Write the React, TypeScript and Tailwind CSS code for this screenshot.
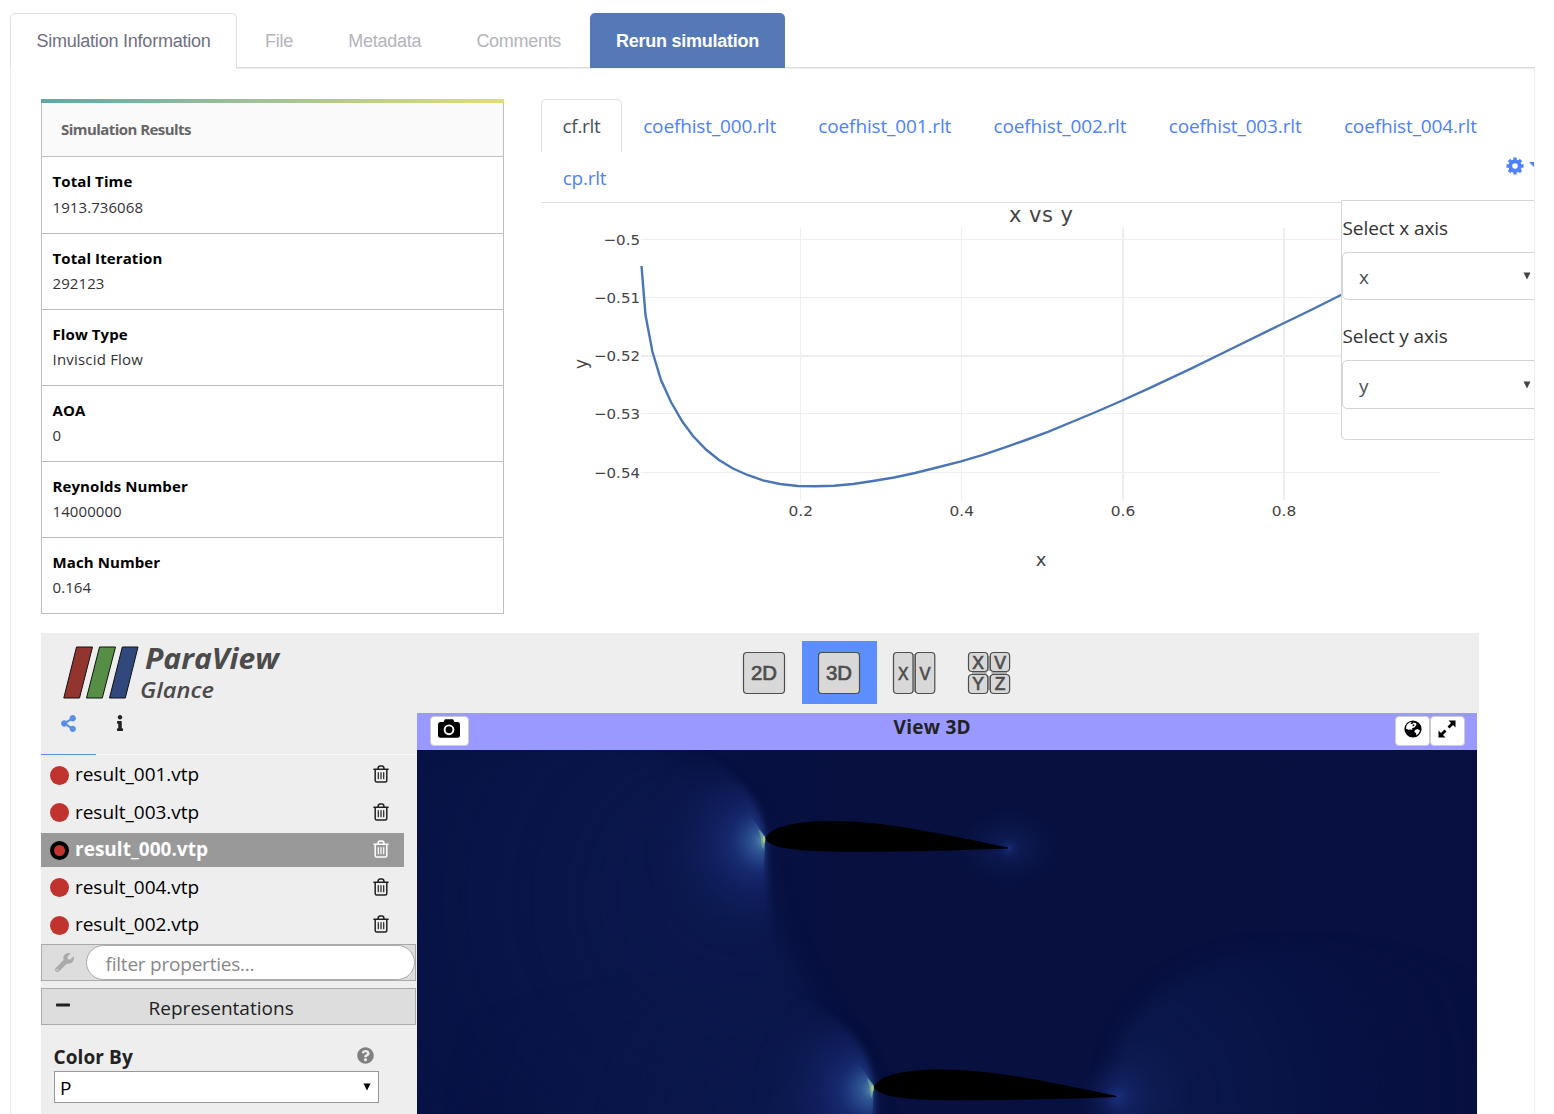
import React from "react";
import { FaShareAlt, FaInfo, FaWrench, FaMinus, FaQuestionCircle } from "react-icons/fa";

const UI = "font-['Open_Sans','Noto_Sans',sans-serif]";

const results = [
  ["Total Time", "1913.736068"],
  ["Total Iteration", "292123"],
  ["Flow Type", "Inviscid Flow"],
  ["AOA", "0"],
  ["Reynolds Number", "14000000"],
  ["Mach Number", "0.164"],
];

function PageTabs() {
  const idle = "flex items-center px-[27px] pt-[2px] text-[#b4b4bc]";
  return (
    <div className="flex h-[55px] w-[1525px] border-b border-[#dcdde0] font-['Liberation_Sans',Arial,sans-serif] text-[18px] tracking-[-0.22px]">
      <div className="flex h-[56px] w-[227px] shrink-0 items-center justify-center rounded-t-[5px] border border-b-0 border-[#dee0e3] bg-white text-[#6f6f80]">
        Simulation Information
      </div>
      <div className={idle + " ml-[1px]"}>File</div>
      <div className={idle + " ml-[1px]"}>Metadata</div>
      <div className={idle + " ml-[1px] tracking-[-0.3px]"}>Comments</div>
      <div className="ml-auto mr-[750px] flex h-[55px] w-[195px] shrink-0 items-center justify-center rounded-t-[5px] bg-[#5578b7] pt-[1px] font-bold tracking-[-0.25px] text-white">
        Rerun simulation
      </div>
    </div>
  );
}

function ResultsCard() {
  return (
    <section className="h-[515px] w-[463px] shrink-0">
      <div className="h-1 bg-gradient-to-r from-[#62a7a5] to-[#e0dc7c]" />
      <div className="border border-t-0 border-[#bcbec2]">
        <h2 className="flex h-[53px] items-center bg-[#fafafa] pl-[19px] text-[15px] font-bold tracking-[-0.55px] text-[#666]">
          Simulation Results
        </h2>
        {results.map(([k, v], i) => (
          <div key={k} className={"border-t border-[#bcbec2] pl-[10.5px] pt-[12px] " + (i === 0 ? "h-[77px]" : "h-[76px]")}>
            <div className="h-[25px] text-[15px] font-bold leading-[25px] tracking-[0.1px] text-black">{k}</div>
            <div className={"h-[25px] text-[15px] text-[#333] " + (i === 0 ? "leading-[26px] tracking-[0.08px]" : i === 2 ? "leading-[24px] tracking-[0.2px]" : "leading-[24px] tracking-[0.08px]")}>{v}</div>
          </div>
        ))}
      </div>
    </section>
  );
}

const curve: [number, number][] = [
  [641.5, 266], [645.5, 315], [652.5, 352], [661, 380], [671, 402], [682, 421], [693, 436], [706, 449.5], [719, 460],
  [733, 468.5], [747.5, 475], [763, 480.3], [780, 484], [798, 486], [815, 486.3], [834, 485.7], [853, 484], [873, 481],
  [894, 477.5], [915, 473], [937, 467.5], [961, 461.3], [983, 454.8], [1005, 447.4], [1026, 440], [1048, 431.8],
  [1073, 421.5], [1097, 411.5], [1120, 401.5], [1150, 387.8], [1190, 369.2], [1230, 349.5], [1280, 325], [1310, 310.5], [1346, 292.5],
];

function Plot() {
  return (
    <svg width="938" height="400" viewBox="541 203 938 400" className="block font-['DejaVu_Sans',Verdana,sans-serif]" fill="#444">
      <g stroke="#eee" shapeRendering="crispEdges">
        {[239.5, 297.5, 413.5, 472.5].map((y) => <path key={y} d={`M641 ${y}H1440`} />)}
        <path d="M641 356H1440" strokeWidth="2" />
        {[800.5, 961.5].map((x) => <path key={x} d={`M${x} 228V500`} />)}
        <path d="M1123 228V500M1284 228V500" strokeWidth="2" />
      </g>
      <polyline points={curve.map((p) => p.join(",")).join(" ")} fill="none" stroke="#4a76b8" strokeWidth="2.4" />
      <text x="1041" y="222" fontSize="21" textAnchor="middle" textLength="64">x vs y</text>
      <g fontSize="14.8" textAnchor="end">
        <text x="640" y="244.7" textLength="36.5" lengthAdjust="spacingAndGlyphs">−0.5</text>
        <text x="640" y="302.7" textLength="46" lengthAdjust="spacingAndGlyphs">−0.51</text>
        <text x="640" y="360.7" textLength="46" lengthAdjust="spacingAndGlyphs">−0.52</text>
        <text x="640" y="418.7" textLength="46" lengthAdjust="spacingAndGlyphs">−0.53</text>
        <text x="640" y="477.7" textLength="46" lengthAdjust="spacingAndGlyphs">−0.54</text>
      </g>
      <g fontSize="14.8" textAnchor="middle">
        {[[800.8, "0.2"], [961.8, "0.4"], [1123, "0.6"], [1284, "0.8"]].map(([x, t]) => (
          <text key={t} x={x} y="515.7" textLength="24.5" lengthAdjust="spacingAndGlyphs">{t}</text>
        ))}
      </g>
      <text x="1041" y="565.5" fontSize="18" textAnchor="middle">x</text>
      <text transform="translate(587 364) rotate(-90)" fontSize="17" textAnchor="middle">y</text>
    </svg>
  );
}

function AxisSelect({ label, value, tall }: { label: string; value: string; tall?: boolean }) {
  return (
    <>
      <div className="h-[30px] pl-[0.5px] text-[19px] leading-[30px] tracking-[-0.08px] text-[#333]">{label}</div>
      <div className={"mb-[21px] mt-[9px] flex w-[230px] items-center rounded-[5px] border border-[#ced4da] pl-[16px] text-[19px] text-[#495057] " + (tall ? "h-[49px]" : "h-[48px]")}>
        <span className={"w-[164px] " + (tall ? "pt-[3px]" : "pt-[2px]")}>{value}</span>
        <svg width="8" height="8" viewBox="0 0 8 8"><path d="M0.5 0.5h7l-3.5 7z" fill="#444" /></svg>
      </div>
    </>
  );
}

function Gear() {
  return (
    <svg width="18" height="18" viewBox="-9 -9 18 18" fill="none" stroke="currentColor">
      <circle r="4.7" strokeWidth="3.8" />
      {[0, 45, 90, 135].map((a) => (
        <path key={a} transform={`rotate(${a})`} d="M0 -8.5V-5.5M0 5.5V8.5" strokeWidth="3.4" />
      ))}
    </svg>
  );
}

function PlotPanel() {
  const tab = "flex h-[52px] w-[175.2px] items-center justify-center pt-[2px]";
  return (
    <section className="relative ml-[37px] h-[504px] w-[994px] shrink-0">
      <div className="flex h-[104px] w-[960px] flex-wrap border-b border-[#dee2e6] text-[19px] tracking-[-0.14px] text-[#4f80ff]">
        <div className="flex h-[53px] w-[81px] items-center justify-center rounded-t-[5px] border border-b-0 border-[#dee2e6] pt-[1px] tracking-[-0.3px] text-[#495057]">cf.rlt</div>
        {["000", "001", "002", "003", "004"].map((n) => (
          <div key={n} className={tab}>{`coefhist_${n}.rlt`}</div>
        ))}
        <div className="-mt-px flex h-[52px] w-[87px] items-center justify-center pt-[2px] tracking-[-0.25px]">cp.rlt</div>
      </div>
      <Plot />
      <div className="absolute left-[965px] top-[58px] flex items-start text-[#4f80ff]">
        <Gear />
        <svg className="ml-[5px] mt-[5px]" width="12" height="6"><path d="M0 0h11l-5.5 5.5z" fill="currentColor" /></svg>
      </div>
      <div className="absolute left-[800px] top-[101px] h-[240px] w-[240px] rounded-bl-[5px] border border-[#d4d6da] bg-white pt-[12px]">
        <AxisSelect label="Select x axis" value="x" />
        <AxisSelect label="Select y axis" value="y" tall />
      </div>
    </section>
  );
}

function Logo() {
  return (
    <svg width="240" height="80" viewBox="41 633 240 80" className="block shrink-0 overflow-visible">
      <g stroke="#111" strokeWidth="1">
        <path d="M76.5 647H92.5L79.5 698H63.8z" fill="#93352f" />
        <path d="M99.5 647H115.5L102.3 698H86.5z" fill="#578e45" />
        <path d="M122.3 647H138L125.3 698H109.5z" fill="#30487c" />
      </g>
      <g className={UI} fill="#4b4b4b" fontStyle="italic">
        <text x="145" y="668.5" fontSize="28" fontWeight="700" textLength="134" lengthAdjust="spacingAndGlyphs">ParaView</text>
        <text x="140" y="698" fontSize="22" fontWeight="600" textLength="74" lengthAdjust="spacingAndGlyphs">Glance</text>
      </g>
    </svg>
  );
}

function LayoutButtons() {
  const key = { fill: "#d8d8d8", stroke: "#4d4d4d", strokeWidth: 1.2 };
  return (
    <svg width="300" height="63" viewBox="727 641 300 63" className="ml-[446px] mt-[8px] block shrink-0 font-['Liberation_Sans',Arial,sans-serif]">
      <rect x="802" y="641" width="75" height="63" fill="#5c8eff" />
      <rect x="743.5" y="652.5" width="41" height="41" rx="3.5" {...key} />
      <rect x="818.5" y="652.5" width="41" height="41" rx="3.5" {...key} />
      <rect x="912" y="654" width="4" height="38" fill="#aaa" />
      <rect x="893.5" y="652.5" width="19.5" height="41" rx="3.5" {...key} />
      <rect x="915.3" y="652.5" width="19.5" height="41" rx="3.5" {...key} />
      <path d="M989 656V690M972 673.3H1007" stroke="#aaa" strokeWidth="4" />
      <circle cx="989" cy="673.3" r="2.5" fill="#fff" />
      {[968.5, 990.3].map((x) => [652.5, 674.5].map((y) => (
        <rect key={`${x}-${y}`} x={x} y={y} width="19.3" height="19" rx="3.5" {...key} />
      )))}
      <g fill="#4d4d4d" stroke="#4d4d4d" strokeWidth="0.7" fontSize="19.5" textAnchor="middle">
        <text x="764" y="680" textLength="26" lengthAdjust="spacingAndGlyphs">2D</text>
        <text x="839" y="680" textLength="26" lengthAdjust="spacingAndGlyphs">3D</text>
        <text x="903.3" y="679.5" fontSize="18.5" textLength="10.5" lengthAdjust="spacingAndGlyphs">X</text>
        <text x="925" y="679.5" fontSize="18.5" textLength="11" lengthAdjust="spacingAndGlyphs">V</text>
        <g fontSize="17.5">
          <text x="978.2" y="668.5" textLength="11">X</text>
          <text x="1000" y="668.5" textLength="11">V</text>
          <text x="978.2" y="690" textLength="11">Y</text>
          <text x="1000" y="690" textLength="11">Z</text>
        </g>
      </g>
    </svg>
  );
}

function Trash() {
  return (
    <svg width="16" height="18" viewBox="0 0 16 18" fill="none" stroke="currentColor" strokeWidth="1.5" strokeLinecap="round">
      <path d="M0.9 4.2H15.1M5 3.8C5 2 5.8 1 7 1H9C10.2 1 11 2 11 3.8M2.2 4.5V15.5Q2.2 17 3.7 17H12.3Q13.8 17 13.8 15.5V4.5" />
      <path d="M5.3 7.7V13.7M8 7.7V13.7M10.7 7.7V13.7" strokeWidth="1.2" />
    </svg>
  );
}

function SourceRow({ name, active }: { name: string; active?: boolean }) {
  return (
    <div className={"mb-[3.5px] flex h-[34px] w-[363px] items-center pl-[9px] text-[19px] " + (active ? "bg-[#999] font-bold tracking-[0.02px] text-white" : "tracking-[-0.03px] text-black")}>
      <span className={"h-[19px] w-[19px] shrink-0 rounded-full bg-[#c0332e] " + (active ? "border-[4px] border-black" : "")} />
      <span className="ml-[6px] w-[297.5px] shrink-0 pb-[1.5px]">{name}</span>
      <span className={"pb-[2px] " + (active ? "text-white" : "text-[#222]")}><Trash /></span>
    </div>
  );
}

function Sidebar() {
  return (
    <aside className="h-[401px] w-[376px] shrink-0 bg-[#eee]">
      <div className="flex h-[42px] border-b border-[#f8f8f8]">
        <div className="flex h-[42px] w-[55px] justify-center border-b border-[#5a8ee8] pt-[2px] text-[#5a8ee8]"><FaShareAlt size={17} /></div>
        <div className="flex w-[47px] justify-center pt-[2px] text-[#222]"><FaInfo size={16} /></div>
      </div>
      <div className="h-[189px] pt-[3px]">
        {["001", "003", "000", "004", "002"].map((n) => (
          <SourceRow key={n} name={`result_${n}.vtp`} active={n === "000"} />
        ))}
      </div>
      <div className="flex h-[37px] w-[375px] items-center border border-[#aaa] bg-[#ddd] pl-[13px]">
        <FaWrench size={19} className="text-[#aaa]" />
        <div className="ml-[12px] h-[35px] w-[329px] rounded-full border border-[#aaa] bg-white pl-[18.5px] text-[19px] leading-[36px] tracking-[-0.22px] text-[#888]">filter properties...</div>
      </div>
      <div className="mt-[7px] flex h-[37px] w-[375px] items-center border border-[#aaa] bg-[#ddd] pl-[13px] text-[19px] text-[#222]">
        <FaMinus size={16} className="-mt-[4px]" />
        <span className="ml-[77.5px] pt-[3px] font-medium tracking-[0.03px]">Representations</span>
      </div>
      <div className="mt-[17px] flex h-[29px] items-center pl-[12.5px] text-[19px] font-bold tracking-[0.1px] text-[#222]">
        <span className="w-[303.5px] pt-[1px]">Color By</span>
        <FaQuestionCircle size={17} className="-mt-[2px] text-[#808080]" />
      </div>
      <div className="ml-[13px] flex h-[32px] w-[325px] items-center border border-[#999] bg-white pl-[5px] text-[19px] text-black">
        <span className="w-[302.5px] pt-[3px]">P</span>
        <svg width="8" height="8" viewBox="0 0 8 8"><path d="M0.5 0.5h7l-3.5 7z" /></svg>
      </div>
    </aside>
  );
}

function Airfoil({ x, y, wake }: { x: number; y: number; wake: "small" | "large" }) {
  return (
    <g transform={`translate(${x} ${y})`}>
      <path d="M-8 0C-14 -40 -50 -70 -130 -90C-220 -105 -360 -70 -460 -40V380H120C110 235 90 220 62 178C20 120 0 80 -2 0z" fill="url(#wide)" filter="url(#soft4)" />
      <path d="M0 0C-3 -25 -9 -40 -26 -57C-50 -80 -80 -100 -170 -140V170H20C8 110 3 60 0 0z" fill="url(#nose)" filter="url(#soft2)" />
      <circle cx="0" cy="2" r="34" fill="url(#hot)" clipPath="url(#left)" />
      <path d="M0.500 0C-2 -5 -5 -8 -7 -9C-5 -5 -4 -2 -4 1C-4 5 -3 8 -2 11C-1 7 0 4 0.500 0z" fill="#7fb5a8" opacity="0.600" filter="url(#soft1)" />
      <ellipse cx="-1" cy="1" rx="1.300" ry="3.500" fill="#c8d468" opacity="0.700" />
      {wake === "small" ? (
        <>
          <ellipse cx="256" cy="16" rx="60" ry="46" fill="url(#tail)" />
          <circle cx="244" cy="10" r="12" fill="url(#tip)" />
        </>
      ) : (
        <>
          <path d="M240 40C228 -10 240 -60 290 -100C350 -145 470 -160 630 -90V40z" fill="url(#wake)" filter="url(#soft5)" />
          <circle cx="244" cy="10" r="40" fill="url(#tip)" />
        </>
      )}
      <path d="M0.500 0C4 -10 25 -17.500 67 -17.500C120 -17.500 175 -5 243 9V10C190 12 140 13.300 90 13.300C40 13.300 4 11 0.500 0z" fill="#000" />
    </g>
  );
}

function FlowField() {
  return (
    <svg width="1060" height="364" viewBox="417 750 1060 364" className="block bg-[#07103f]">
      <defs>
        <linearGradient id="base" x1="0" x2="1">
          <stop offset="0" stopColor="#071245" />
          <stop offset="0.250" stopColor="#071143" />
          <stop offset="0.450" stopColor="#07103e" />
          <stop offset="1" stopColor="#071040" />
        </linearGradient>
        <radialGradient id="wide" gradientUnits="userSpaceOnUse" cx="-40" cy="60" r="380">
          <stop offset="0" stopColor="#0c1a51" stopOpacity="0.900" />
          <stop offset="0.300" stopColor="#0b184d" stopOpacity="0.800" />
          <stop offset="0.650" stopColor="#0a164a" stopOpacity="0.500" />
          <stop offset="1" stopColor="#081346" stopOpacity="0" />
        </radialGradient>
        <radialGradient id="nose" gradientUnits="userSpaceOnUse" cx="-4" cy="4" r="115">
          <stop offset="0" stopColor="#2a4c93" />
          <stop offset="0.180" stopColor="#1e3680" stopOpacity="0.850" />
          <stop offset="0.400" stopColor="#16266c" stopOpacity="0.650" />
          <stop offset="0.680" stopColor="#101e5a" stopOpacity="0.350" />
          <stop offset="1" stopColor="#0c184e" stopOpacity="0" />
        </radialGradient>
        <radialGradient id="hot">
          <stop offset="0" stopColor="#5d9aa8" />
          <stop offset="0.350" stopColor="#3a689e" stopOpacity="0.600" />
          <stop offset="1" stopColor="#24408c" stopOpacity="0" />
        </radialGradient>
        <radialGradient id="tail" cx="0.400" cy="0.420">
          <stop offset="0" stopColor="#101e5a" />
          <stop offset="0.500" stopColor="#0a174a" stopOpacity="0.700" />
          <stop offset="1" stopColor="#081344" stopOpacity="0" />
        </radialGradient>
        <radialGradient id="tip">
          <stop offset="0" stopColor="#1c3280" stopOpacity="0.900" />
          <stop offset="0.350" stopColor="#15276c" stopOpacity="0.500" />
          <stop offset="1" stopColor="#101e5c" stopOpacity="0" />
        </radialGradient>
        <radialGradient id="wake" gradientUnits="userSpaceOnUse" cx="250" cy="10" r="360">
          <stop offset="0" stopColor="#101f5a" />
          <stop offset="0.200" stopColor="#0b184c" stopOpacity="0.900" />
          <stop offset="0.550" stopColor="#081346" stopOpacity="0.800" />
          <stop offset="1" stopColor="#071142" stopOpacity="0" />
        </radialGradient>
        <clipPath id="left"><path d="M-40 -28H-18L0 -2V10L-2 40H-40z" /></clipPath>
        <filter id="soft1" colorInterpolationFilters="sRGB"><feGaussianBlur stdDeviation="0.700" /></filter>
        <filter id="soft2" colorInterpolationFilters="sRGB"><feGaussianBlur stdDeviation="3" /></filter>
        <filter id="soft4" colorInterpolationFilters="sRGB"><feGaussianBlur stdDeviation="11" /></filter>
        <filter id="soft5" colorInterpolationFilters="sRGB"><feGaussianBlur stdDeviation="9" /></filter>
      </defs>
      <rect x="417" y="750" width="1060" height="364" fill="url(#base)" />
      <Airfoil x={765} y={838.5} wake="small" />
      <Airfoil x={873.5} y={1087} wake="large" />
    </svg>
  );
}

function Camera() {
  return (
    <svg width="22" height="19" viewBox="0 0 22 19">
      <path d="M2.500 3H5.500L7 0.300H15L16.500 3H19.500Q22 3 22 5.500V16.500Q22 18.800 19.500 18.800H2.500Q0 18.800 0 16.500V5.500Q0 3 2.500 3z" />
      <circle cx="11" cy="10.800" r="4.400" fill="none" stroke="#fff" strokeWidth="1.900" />
    </svg>
  );
}

function Globe() {
  return (
    <svg width="18" height="18" viewBox="0 0 18 18">
      <circle cx="9" cy="9" r="8.600" />
      <path d="M1.800 8.500L2.800 4.800L5.800 2.200L7.500 2L6.500 3.800L8.300 4.200L9.500 2.600L12 3.200L12.500 5L10.300 7.500L8 8.300L8.500 9.800L6.500 9.500L4.500 9.700zM11 10L13.500 9L16 10.500L14.800 13.300L12.500 15.500L12 13L10.300 12z" fill="#fff" />
      <path d="M8.500 5L10 4L10.500 5.500L8.800 6.500z" />
    </svg>
  );
}

function Expand() {
  return (
    <svg width="18" height="18" viewBox="0 0 18 18">
      <path d="M10.500 0.500H17.500V7.500L15 5L11.500 8.500L9.500 6.500L13 3zM7.500 17.500H0.500V10.500L3 13L6.500 9.500L8.500 11.500L5 15z" />
    </svg>
  );
}

function Viewer() {
  const button = "flex h-[30px] justify-center rounded-[4px] border border-[#ccc] bg-white";
  return (
    <section className="w-[1060px] shrink-0">
      <header className="flex h-[37px] bg-[#9999ff] pl-[13px] pt-[3px]">
        <button className={button + " w-[39px] pr-[1px] pt-[2px]"}><Camera /></button>
        <h3 className="-mt-[3px] ml-[424.5px] w-[80px] whitespace-nowrap text-[19px] font-bold leading-[29px] tracking-[0.28px] text-[#222]">View 3D</h3>
        <button className={button + " ml-[421.5px] w-[35px] pt-[3px]"}><Globe /></button>
        <button className={button + " w-[35px] pr-[1px] pt-[3px]"}><Expand /></button>
      </header>
      <FlowField />
    </section>
  );
}

export default function App() {
  return (
    <main className={UI + " h-[1114px] w-[1554px] overflow-hidden bg-white pl-[10px] pt-[13px]"}>
      <PageTabs />
      <div className="h-[1060px] w-[1525px] overflow-hidden border border-[#eee] pl-[30px] pt-[30px]">
        <div className="flex h-[534px]">
          <ResultsCard />
          <PlotPanel />
        </div>
        <div className="w-[1438px]">
          <div className="flex h-[80px] bg-[#eee]">
            <Logo />
            <LayoutButtons />
          </div>
          <div className="flex">
            <Sidebar />
            <Viewer />
          </div>
        </div>
      </div>
    </main>
  );
}
